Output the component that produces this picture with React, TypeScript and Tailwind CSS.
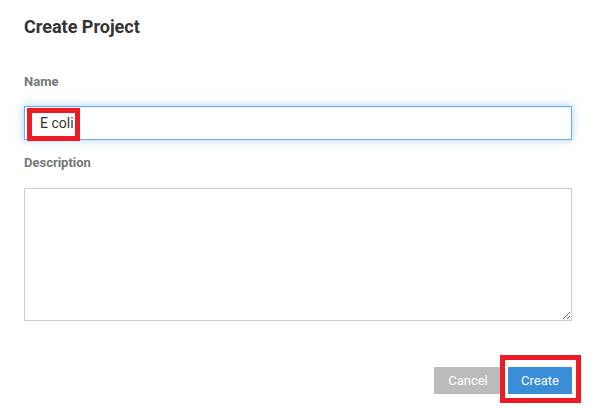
import { useState } from 'react';

export default function App() {
  const [name, setName] = useState('E coli');
  const [description, setDescription] = useState('');

  return (
    <div className="w-[594px] h-[408px] bg-white font-['Roboto',sans-serif] pl-[24px] pr-[22px] pt-[15px]">
      <h2 className="text-[18px] leading-6 font-bold text-[#333]">Create Project</h2>

      <label className="block mt-[34px] text-[13px] leading-[18px] font-bold text-[#777]">Name</label>
      <div className="relative mt-[15px]">
        <input
          value={name}
          onChange={(e) => setName(e.target.value)}
          className="w-full h-[34px] pl-[15px] pr-3 text-[14px] text-[#333] bg-white border border-[#66afe9] outline-none shadow-[inset_0_1px_1px_rgba(0,0,0,0.075),0_0_8px_rgba(102,175,233,0.6)]"
        />
        {/* annotation */}
        <div className="absolute left-[3px] top-[2px] w-[53px] h-[33px] border-[5px] border-[#ed1c24] pointer-events-none" />
      </div>

      <label className="block mt-[14px] text-[13px] leading-[18px] font-bold text-[#777]">Description</label>
      <textarea
        value={description}
        onChange={(e) => setDescription(e.target.value)}
        className="block w-full h-[133px] mt-[16px] border border-[#ccc] bg-white outline-none px-3 py-2 text-[14px]"
      />

      <div className="relative flex justify-end gap-[6px] mt-[46px]">
        <button className="w-[68px] h-[27px] bg-[#bbbbbb] text-white text-[13px]">Cancel</button>
        <button className="w-[64px] h-[27px] bg-[#3a8ed8] text-white text-[13px]">Create</button>
        {/* annotation */}
        <div className="absolute right-[-9px] top-[-12px] w-[81px] h-[48px] border-[5px] border-[#ed1c24] shadow-[inset_0_0_0_3px_#fff] pointer-events-none" />
      </div>
    </div>
  );
}
